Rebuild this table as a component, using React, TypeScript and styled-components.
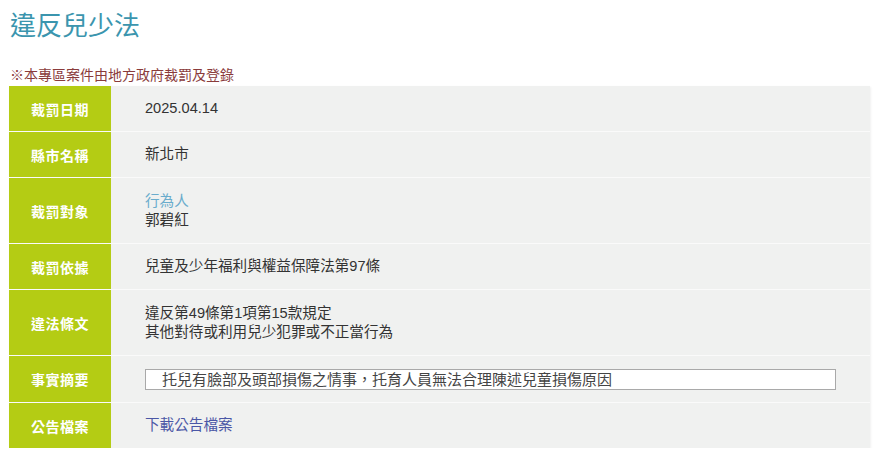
import React from "react";
import styled, { createGlobalStyle } from "styled-components";

const Global = createGlobalStyle`
  html, body { margin: 0; padding: 0; background: #fff; }
  body { font-family: "Liberation Sans", "Noto Sans CJK TC", sans-serif; }
`;

const Page = styled.div`
  padding: 0 10px 0 9px;
  width: 880px;
  box-sizing: border-box;
`;

const Title = styled.h1`
  margin: 0;
  padding: 8px 0 0 1px;
  font-size: 26px;
  line-height: 36px;
  font-weight: 400;
  color: #3b95ae;
`;

const Note = styled.p`
  margin: 20px 0 0 1px;
  font-size: 14px;
  line-height: 22px;
  color: #8a3b3b;
`;

const Table = styled.div`
  display: flex;
  flex-direction: column;
  background: #f0f1f0;
  box-shadow: 1px 1px 2px rgba(0, 0, 0, 0.06);
`;

const Row = styled.div<{ $h: number }>`
  display: grid;
  grid-template-columns: 102px 1fr;
  height: ${(p) => p.$h}px;
  & + & { border-top: 1px solid #fafafa; }
`;

const Label = styled.div`
  background: #b4cc14;
  color: #fff;
  font-weight: 700;
  font-size: 14px;
  display: flex;
  align-items: center;
  justify-content: center;
  letter-spacing: 0.5px;
`;

const Value = styled.div`
  display: flex;
  flex-direction: column;
  justify-content: center;
  padding-left: 34px;
  padding-right: 34px;
  font-size: 14.6px;
  line-height: 19px;
  color: #333;
`;

const Role = styled.span`
  color: #6aaccc;
`;

const Link = styled.a`
  color: #4b57a6;
  text-decoration: none;
`;

const Box = styled.div`
  height: 19px;
  border: 1px solid #a9a9a9;
  background: #fff;
  padding-left: 16px;
  font-size: 15px;
  line-height: 19px;
  color: #444;
`;

const rows: { label: string; h: number; content: React.ReactNode }[] = [
  { label: "裁罰日期", h: 45, content: "2025.04.14" },
  { label: "縣市名稱", h: 45, content: "新北市" },
  {
    label: "裁罰對象",
    h: 65,
    content: (
      <>
        <Role>行為人</Role>
        <span>郭碧紅</span>
      </>
    ),
  },
  { label: "裁罰依據", h: 45, content: "兒童及少年福利與權益保障法第97條" },
  {
    label: "違法條文",
    h: 65,
    content: (
      <>
        <span>違反第49條第1項第15款規定</span>
        <span>其他對待或利用兒少犯罪或不正當行為</span>
      </>
    ),
  },
  {
    label: "事實摘要",
    h: 46,
    content: <Box>托兒有臉部及頭部損傷之情事，托育人員無法合理陳述兒童損傷原因</Box>,
  },
  { label: "公告檔案", h: 45, content: <Link href="#">下載公告檔案</Link> },
];

export default function App() {
  return (
    <Page>
      <Global />
      <Title>違反兒少法</Title>
      <Note>※本專區案件由地方政府裁罰及登錄</Note>
      <Table>
        {rows.map((r) => (
          <Row key={r.label} $h={r.h}>
            <Label>{r.label}</Label>
            <Value>{r.content}</Value>
          </Row>
        ))}
      </Table>
    </Page>
  );
}
